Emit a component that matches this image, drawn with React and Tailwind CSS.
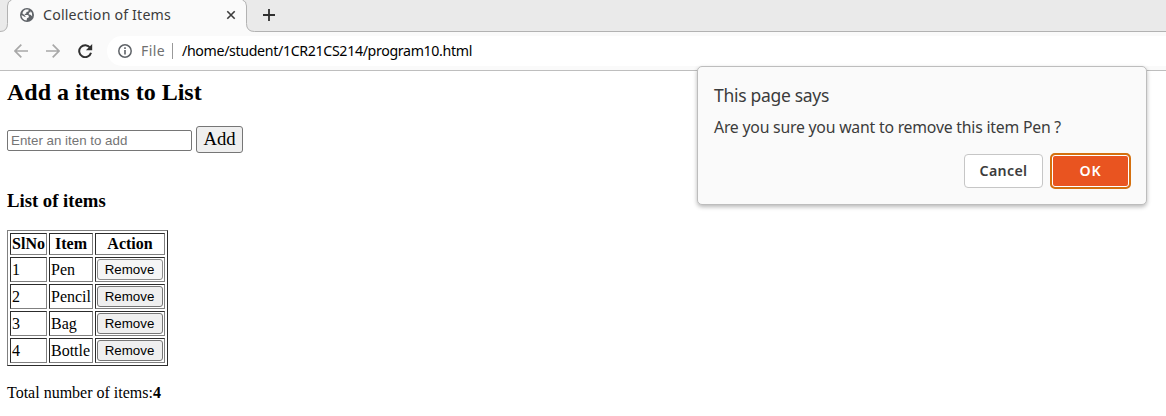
import React from "react";

const items = ["Pen", "Pencil", "Bag", "Bottle"];

const cell =
  "border border-t-[#2c2c2c] border-l-[#2c2c2c] border-r-[#808080] border-b-[#808080] p-px leading-[18px]";

function FitText({ width, size, weight = 400, fill, children, className }) {
  const ref = React.useRef(null);
  const [spacing, setSpacing] = React.useState(0);
  React.useLayoutEffect(() => {
    const natural = ref.current.getBoundingClientRect().width;
    setSpacing((width - natural) / children.length);
  }, []);
  return (
    <span
      ref={ref}
      className={"inline-block whitespace-pre " + className}
      style={{ fontSize: size, fontWeight: weight, color: fill, letterSpacing: spacing }}
    >
      {children}
    </span>
  );
}

function TabStrip() {
  return (
    <div className="flex h-8 bg-[#fafafa]">
      <svg width="14" height="32" viewBox="0 0 14 32" className="shrink-0">
        <path d="M0 0H10.5Q7.5 2 7.5 6V24Q7.5 31.5 0 31.5Z" fill="#eaeaea" />
        <path d="M11.5 0Q7.5 1 7.5 6V23.5Q7.5 31.5 0 31.5" fill="none" stroke="#b2b2b2" />
      </svg>
      <div className="flex h-[30px] w-[226px] items-center pl-[6px]">
        <svg width="14" height="14" viewBox="0 0 14 14" className="shrink-0">
          <circle cx="7" cy="7" r="7" fill="#5f6368" />
          <path d="M5.6 1.6H8.6L8.4 3.4L6.4 3.9L6.3 5.6L4.6 6L4.9 6.9L8 7L8.9 8.2L8.6 9.6L7 10.2L6.6 12.5C3.5 12.2 1.5 10 1.5 7L4.6 8.8L5.6 8.9L5.4 7.9L2.3 5.2Q3.2 2.4 5.6 1.6M10.4 2.8Q12.8 5 12.2 8.2L10.4 6.8L8.6 6.2L9.2 4.4L10.7 4.2Z" fill="#fafafa" />
        </svg>
        <FitText width={128} size={14.2} fill="#3c3c3c" className="ml-[9px]">
          Collection of Items
        </FitText>
        <svg width="10" height="10" viewBox="0 0 10 10" className="ml-[55px] shrink-0">
          <path d="M1.3 1.3L8.7 8.7M8.7 1.3L1.3 8.7" stroke="#3c3c3c" strokeWidth="1.6" />
        </svg>
      </div>
      <svg width="16" height="32" viewBox="0 0 16 32" className="shrink-0">
        <path d="M4 0Q6.5 2 6.5 6V24Q6.5 31.5 14 31.5H16V0Z" fill="#eaeaea" />
        <path d="M2.5 0Q6.5 1 6.5 6V23.5Q6.5 31.5 14.5 31.5H16" fill="none" stroke="#b2b2b2" />
      </svg>
      <div className="flex flex-1 items-center border-b border-[#b2b2b2] bg-[#eaeaea] pb-px pl-[7px]">
        <svg width="12" height="12" viewBox="0 0 12 12">
          <path d="M6 0V12M0 6H12" stroke="#303030" strokeWidth="1.8" />
        </svg>
      </div>
    </div>
  );
}

function Toolbar() {
  return (
    <div className="flex h-[39px] items-center border-b border-[#bebebe] bg-[#fafafa] pl-[14px]">
      <svg width="14" height="14" viewBox="0 0 14 14" fill="none" stroke="#a8a8a8" strokeWidth="1.7">
        <path d="M14 7H1M7.3 .7L1 7L7.3 13.3" />
      </svg>
      <svg width="14" height="14" viewBox="0 0 14 14" fill="none" stroke="#a8a8a8" strokeWidth="1.7" className="ml-[18px]">
        <path d="M0 7H13M6.7 .7L13 7L6.7 13.3" />
      </svg>
      <svg width="15" height="14" viewBox="0 0 15 14" className="ml-[17.5px]">
        <path d="M12.2 3.8A6 6 0 1 0 13 8.7" fill="none" stroke="#303030" strokeWidth="2" />
        <path d="M14.2 0V6.3H7.9Z" fill="#303030" />
      </svg>
      <div className="ml-[14.5px] flex h-[30px] flex-1 items-center rounded-l-full bg-white pl-[11px]">
        <svg width="14" height="14" viewBox="0 0 14 14" className="shrink-0">
          <circle cx="7" cy="7" r="6.2" fill="none" stroke="#5f6368" strokeWidth="1.5" />
          <path d="M7 6V10.5M7 3.3V4.9" stroke="#5f6368" strokeWidth="1.6" />
        </svg>
        <FitText width={24} size={14} fill="#707070" className="ml-[9px] pb-px">
          File
        </FitText>
        <div className="ml-[7px] h-4 w-px bg-[#999]" />
        <FitText width={290} size={14.2} fill="#000000" className="ml-[9px] pb-px">
          /home/student/1CR21CS214/program10.html
        </FitText>
      </div>
    </div>
  );
}

function ConfirmDialog() {
  return (
    <div className="absolute left-[697px] top-[66px] flex h-[139px] w-[450px] flex-col rounded-[5px] border border-[#bdbdbd] bg-[#fafafa] px-4 shadow-[0_2px_4px_rgba(0,0,0,0.28)]">
      <div className="mt-[16px] h-6 leading-6">
        <FitText width={115} size={17.5} fill="#3c3c3c" className="">
          This page says
        </FitText>
      </div>
      <div className="mt-[8px] h-6 leading-6">
        <FitText width={347} size={15.8} fill="#3c3c3c" className="">
          Are you sure you want to remove this item Pen ?
        </FitText>
      </div>
      <div className="-mr-px mt-[14px] flex items-center justify-end gap-[7px]">
        <button className="flex h-[34px] w-[79px] items-center justify-center rounded-[4px] border border-[#c6c6c6] bg-white">
          <FitText width={48} size={14.2} weight={600} fill="#3c3c3c" className="">
            Cancel
          </FitText>
        </button>
        <button className="flex h-9 w-[81px] items-center justify-center rounded-[5px] border-2 border-[#d4700f] bg-[#e95420] shadow-[inset_0_0_0_1px_#fff]">
          <FitText width={22} size={14.2} weight={600} fill="#ffffff" className="">
            OK
          </FitText>
        </button>
      </div>
    </div>
  );
}

export default function App() {
  return (
    <div className="relative h-[416px] w-[1166px] overflow-hidden bg-white font-['Noto_Sans',sans-serif]">
      <TabStrip />
      <Toolbar />
      <main className="pl-[7px] font-['Liberation_Serif',serif] text-[16px] leading-[18px] text-black">
        <h2 className="mt-[7px] text-[24px] font-bold leading-[28px]">Add a items to List</h2>
        <div className="mt-5 flex h-[27px] items-start">
          <input
            placeholder="Enter an iten to add"
            className="mt-1 h-[21px] w-[185px] rounded-[2px] border border-[#767676] px-[3px] font-['Liberation_Sans',sans-serif] text-[13.333px] placeholder:text-[#757575]"
          />
          <button className="ml-1 h-[27px] w-[47px] rounded-[3px] border border-[#767676] bg-[#efefef] pb-px text-[18.67px] leading-[24px]">
            Add
          </button>
        </div>
        <h3 className="mt-[37px] text-[18.72px] font-bold leading-[22px]">List of items</h3>
        <table className="mt-[18px] w-[161px] table-fixed border-separate border-spacing-[2px] border border-t-[#808080] border-l-[#808080] border-r-[#2c2c2c] border-b-[#2c2c2c]">
          <colgroup>
            <col className="w-[37px]" />
            <col className="w-[44px]" />
            <col className="w-[70px]" />
          </colgroup>
          <thead>
            <tr className="h-[22px]">
              <th className={cell}>SlNo</th>
              <th className={cell}>Item</th>
              <th className={cell}>Action</th>
            </tr>
          </thead>
          <tbody>
            {items.map((item, i) => (
              <tr key={item} className="group h-[25px]">
                <td className={cell}>{i + 1}</td>
                <td className={cell}>{item}</td>
                <td className={cell}>
                  <button className="block h-[21px] w-[66px] rounded-[3px] border border-[#767676] bg-[#efefef] pr-px font-['Liberation_Sans',sans-serif] text-[13.333px] leading-[17px] group-first:border-[#8d8d8d] group-first:bg-[#f5f5f5]">
                    Remove
                  </button>
                </td>
              </tr>
            ))}
          </tbody>
        </table>
        <p className="mt-[18px]">
          Total number of items:<b>{items.length}</b>
        </p>
      </main>
      <ConfirmDialog />
    </div>
  );
}
